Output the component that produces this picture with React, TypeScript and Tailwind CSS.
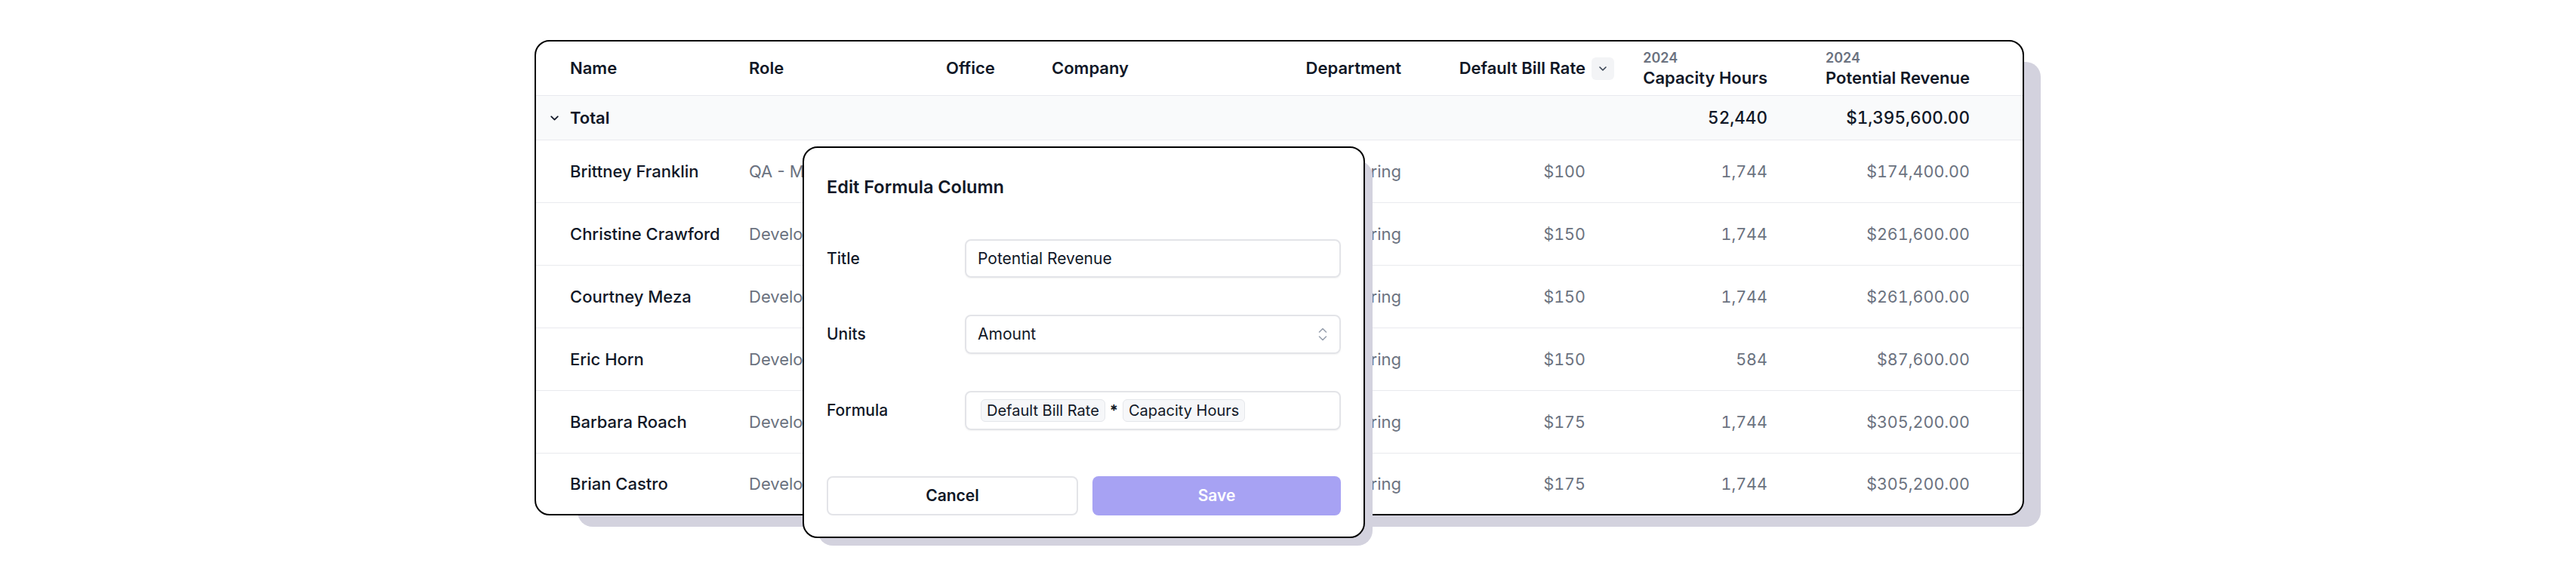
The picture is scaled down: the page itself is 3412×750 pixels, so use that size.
import React from "react";

const rows = [
  { name: "Brittney Franklin", role: "QA - Manual", office: "New York", company: "Acme Corp", dept: "Engineering", rate: "$100", hours: "1,744", rev: "$174,400.00" },
  { name: "Christine Crawford", role: "Developer", office: "New York", company: "Acme Corp", dept: "Engineering", rate: "$150", hours: "1,744", rev: "$261,600.00" },
  { name: "Courtney Meza", role: "Developer", office: "Boston", company: "Acme Corp", dept: "Engineering", rate: "$150", hours: "1,744", rev: "$261,600.00" },
  { name: "Eric Horn", role: "Developer", office: "Boston", company: "Acme Corp", dept: "Engineering", rate: "$150", hours: "584", rev: "$87,600.00" },
  { name: "Barbara Roach", role: "Developer", office: "Denver", company: "Acme Corp", dept: "Engineering", rate: "$175", hours: "1,744", rev: "$305,200.00" },
  { name: "Brian Castro", role: "Developer", office: "Denver", company: "Acme Corp", dept: "Engineering", rate: "$175", hours: "1,744", rev: "$305,200.00" },
];

const grid = "grid grid-cols-[237px_261px_140px_307px_156px_284px_201px_268px] pl-[45px] pr-[70px]";

function ChevronDown({ className }: { className?: string }) {
  return (
    <svg viewBox="0 0 12 8" className={className} fill="none" stroke="currentColor" strokeWidth="1.6" strokeLinecap="round" strokeLinejoin="round">
      <path d="M2 2 L6 6 L10 2" />
    </svg>
  );
}

function UpDown() {
  return (
    <svg viewBox="0 0 16 20" className="w-[16px] h-[20px] text-gray-400" fill="none" stroke="currentColor" strokeWidth="1.6" strokeLinecap="round" strokeLinejoin="round">
      <path d="M3.5 7 L8 2.5 L12.5 7" />
      <path d="M3.5 13 L8 17.5 L12.5 13" />
    </svg>
  );
}

export default function App() {
  return (
    <div className="w-[3412px] h-[750px] bg-white font-['Inter','Noto_Sans',sans-serif] text-[#111827] overflow-hidden">
      <div className="pl-[708px] pt-[53px]">
        <div className="relative w-[1973px]">
          {/* table shadow */}
          <div className="absolute left-[57px] top-[29px] right-[-22px] bottom-[-15px] rounded-[20px] bg-[#d3d2de]" />
          {/* table */}
          <div className="relative rounded-[20px] border-2 border-black bg-white overflow-hidden">
            {/* header */}
            <div className={`${grid} h-[72px] items-center border-b border-[#e9eaee] text-[22px] font-semibold`}>
              <div>Name</div>
              <div>Role</div>
              <div>Office</div>
              <div>Company</div>
              <div className="text-right">Department</div>
              <div className="flex items-center justify-end gap-[8px] pr-[2px]">
                <span>Default Bill Rate</span>
                <span className="w-[30px] h-[30px] rounded-[6px] bg-[#f3f4f6] flex items-center justify-center">
                  <ChevronDown className="w-[12px] h-[8px] text-[#374151]" />
                </span>
              </div>
              <div className="flex justify-end">
                <div className="flex flex-col">
                  <span className="text-[18px] leading-[24px] text-[#6b7280]">2024</span>
                  <span className="leading-[28px]">Capacity Hours</span>
                </div>
              </div>
              <div className="flex justify-end">
                <div className="flex flex-col">
                  <span className="text-[18px] leading-[24px] text-[#6b7280]">2024</span>
                  <span className="leading-[28px]">Potential Revenue</span>
                </div>
              </div>
            </div>
            {/* total */}
            <div className={`${grid} h-[59px] items-center border-b border-[#e9eaee] bg-[#f9fafb] text-[22px]`}>
              <div className="relative font-semibold">
                <ChevronDown className="absolute left-[-27px] top-[12px] w-[13px] h-[9px] text-[#111827]" />
                Total
              </div>
              <div />
              <div />
              <div />
              <div />
              <div />
              <div className="text-right font-medium tabular-nums text-[22.5px]">52,440</div>
              <div className="text-right font-medium tabular-nums text-[22.5px]">$1,395,600.00</div>
            </div>
            {rows.map((r, i) => (
              <div
                key={r.name}
                className={`${grid} ${i < rows.length - 1 ? "h-[83px] border-b border-[#e9eaee]" : "h-[80px]"} items-center text-[22px]`}
              >
                <div className="font-medium text-[#111827]">{r.name}</div>
                <div className="text-[#6b7280]">{r.role}</div>
                <div className="text-[#6b7280]">{r.office}</div>
                <div className="text-[#6b7280]">{r.company}</div>
                <div className="text-right text-[#6b7280]">{r.dept}</div>
                <div className="text-right text-[#6b7280] pr-[40px] tabular-nums text-[21.5px]">{r.rate}</div>
                <div className="text-right text-[#6b7280] tabular-nums text-[21.5px]">{r.hours}</div>
                <div className="text-right text-[#6b7280] tabular-nums text-[21.5px]">{r.rev}</div>
              </div>
            ))}
          </div>

          {/* modal */}
          <div className="absolute left-[355px] top-[141px] w-[745px] h-[519px]">
            <div className="absolute left-[20px] top-[19px] right-[-10px] bottom-[-10px] rounded-[20px] bg-[#d3d2de]" />
            <div className="relative h-full rounded-[20px] border-2 border-black bg-white px-[30px] pt-[36px] flex flex-col">
              <div className="text-[23.5px] leading-[32px] font-semibold">Edit Formula Column</div>
              <div className="mt-[53px] flex flex-col gap-[49px]">
                <div className="flex items-center">
                  <div className="w-[183px] text-[21px] font-medium">Title</div>
                  <div className="flex-1 h-[51px] rounded-[8px] border-2 border-[#e3e4e8] shadow-[0_1px_2px_rgba(0,0,0,0.05)] flex items-center px-[15px] text-[21px]">
                    Potential Revenue
                  </div>
                </div>
                <div className="flex items-center">
                  <div className="w-[183px] text-[21px] font-medium">Units</div>
                  <div className="flex-1 h-[52px] rounded-[8px] border-2 border-[#e3e4e8] shadow-[0_1px_2px_rgba(0,0,0,0.05)] flex items-center justify-between pl-[15px] pr-[14px] text-[21px]">
                    <span>Amount</span>
                    <UpDown />
                  </div>
                </div>
                <div className="flex items-center">
                  <div className="w-[183px] text-[21px] font-medium">Formula</div>
                  <div className="flex-1 h-[52px] rounded-[8px] border-2 border-[#e3e4e8] shadow-[0_1px_2px_rgba(0,0,0,0.05)] flex items-center pl-[19px] text-[20px] gap-[6px]">
                    <span className="h-[30px] px-[7px] rounded-[6px] border border-[#e5e7eb] bg-[#f6f7f9] flex items-center">Default Bill Rate</span>
                    <span className="font-bold">*</span>
                    <span className="h-[30px] px-[7px] rounded-[6px] border border-[#e5e7eb] bg-[#f6f7f9] flex items-center">Capacity Hours</span>
                  </div>
                </div>
              </div>
              <div className="mt-[61px] flex gap-[19px]">
                <button className="flex-1 h-[52px] rounded-[8px] border-2 border-[#e3e4e8] bg-white text-[21px] font-semibold text-[#111827]">Cancel</button>
                <button className="flex-1 h-[52px] rounded-[8px] bg-[#a7a2f3] text-[21px] font-semibold text-white">Save</button>
              </div>
            </div>
          </div>
        </div>
      </div>
    </div>
  );
}
